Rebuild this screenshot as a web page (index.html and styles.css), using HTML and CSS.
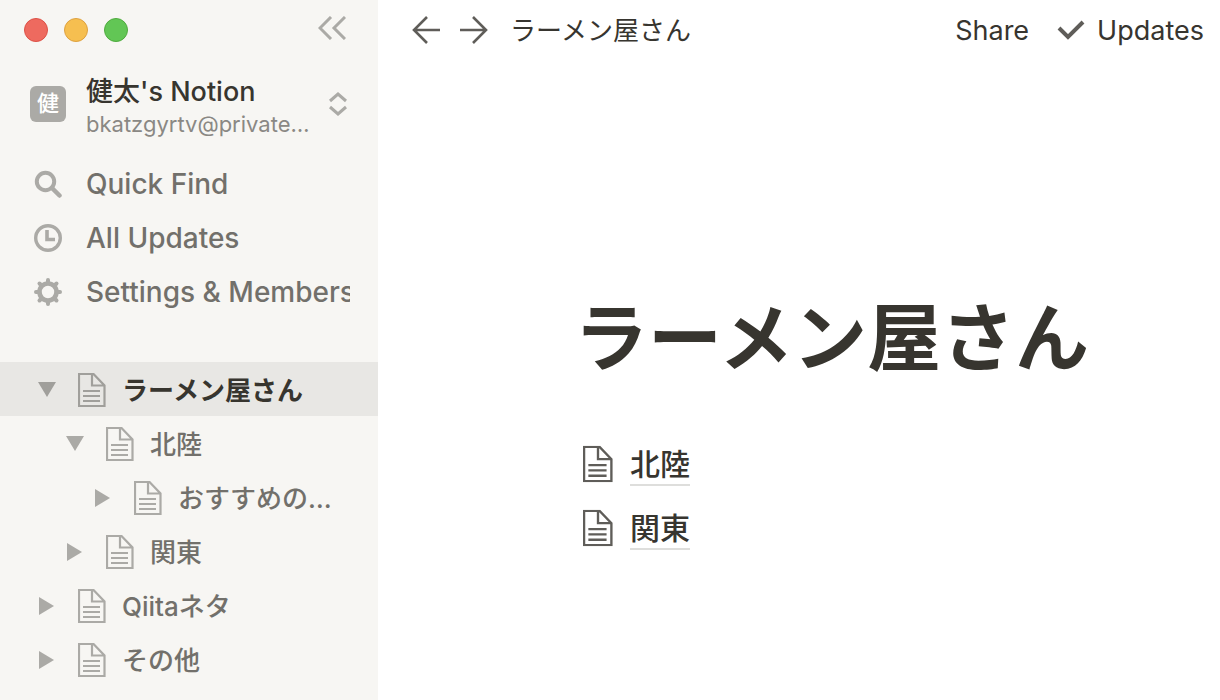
FILE: index.html
```
<!DOCTYPE html>
<html lang="ja">

<head>
    <meta charset="UTF-8">
    <meta name="viewport" content="width=device-width, initial-scale=1.0">
    <title>ラーメン屋さん</title>
    <link rel="stylesheet" href="styles.css">
</head>

<body>
    <!-- 共通アイコン -->
    <svg class="sprite" aria-hidden="true">
        <symbol id="icon-page" viewBox="0 0 28 34">
            <path fill="none" stroke="currentColor" stroke-width="2.200" d="M1 1H15.500L26.500 12.500V33H1ZM14 1V12.500H26.500M5 18H22M5 23H22M5 28H22" />
        </symbol>
        <symbol id="icon-open" viewBox="0 0 18 18">
            <path fill="currentColor" d="M0 1H18L9 16Z" />
        </symbol>
        <symbol id="icon-closed" viewBox="0 0 18 18">
            <path fill="currentColor" d="M1 0V18L16 9Z" />
        </symbol>
    </svg>

    <div class="app">
        <aside class="sidebar">
            <div class="window-bar">
                <button class="dot red" aria-label="閉じる"></button>
                <button class="dot yellow" aria-label="しまう"></button>
                <button class="dot green" aria-label="拡大"></button>
                <button class="collapse" aria-label="サイドバーを閉じる">
                    <svg width="28" height="24" viewBox="0 0 28 24">
                        <path fill="none" stroke="currentColor" stroke-width="3" d="M13 1L2 12L13 23M27 1L16 12L27 23" />
                    </svg>
                </button>
            </div>

            <button class="workspace">
                <span class="avatar">健</span>
                <span class="account">
                    <span class="account-name">健太's Notion</span>
                    <span class="account-mail">bkatzgyrtv@private…</span>
                </span>
                <svg width="18" height="24" viewBox="0 0 18 24">
                    <path fill="none" stroke="currentColor" stroke-width="3" d="M1 9L9 2L17 9M1 15L9 22L17 15" />
                </svg>
            </button>

            <nav class="menu">
                <a class="menu-item" href="#find">
                    <svg width="28" height="28" viewBox="0 0 28 28">
                        <circle cx="11.500" cy="11.500" r="8.700" fill="none" stroke="currentColor" stroke-width="4" />
                        <path stroke="currentColor" stroke-width="4.500" stroke-linecap="round" d="M18 18L25.500 25.500" />
                    </svg>
                    <span>Quick Find</span>
                </a>
                <a class="menu-item" href="#updates">
                    <svg width="28" height="28" viewBox="0 0 28 28">
                        <circle cx="14" cy="14" r="12.300" fill="none" stroke="currentColor" stroke-width="3.400" />
                        <path fill="none" stroke="currentColor" stroke-width="3.600" d="M13 6V15.500H21" />
                    </svg>
                    <span>All Updates</span>
                </a>
                <a class="menu-item" href="#settings">
                    <svg width="28" height="28" viewBox="0 0 28 28">
                        <circle cx="14" cy="14" r="8.500" fill="none" stroke="currentColor" stroke-width="4.600" />
                        <path stroke="currentColor" stroke-width="4" stroke-linecap="round" d="M14 2V5M14 23V26M2 14H5M23 14H26M5.500 5.500L7.500 7.500M20.500 20.500L22.500 22.500M5.500 22.500L7.500 20.500M20.500 7.500L22.500 5.500" />
                    </svg>
                    <span>Settings &amp; Members</span>
                </a>
            </nav>

            <ul class="tree">
                <li>
                    <div class="row current">
                        <button class="toggle" aria-label="ラーメン屋さんを閉じる"><svg width="18" height="18"><use href="#icon-open" /></svg></button>
                        <a class="page-link" href="#ramen"><svg width="28" height="34"><use href="#icon-page" /></svg><span>ラーメン屋さん</span></a>
                    </div>
                    <ul>
                        <li>
                            <div class="row">
                                <button class="toggle" aria-label="北陸を閉じる"><svg width="18" height="18"><use href="#icon-open" /></svg></button>
                                <a class="page-link" href="#hokuriku"><svg width="28" height="34"><use href="#icon-page" /></svg><span>北陸</span></a>
                            </div>
                            <ul>
                                <li>
                                    <div class="row">
                                        <button class="toggle" aria-label="おすすめを開く"><svg width="18" height="18"><use href="#icon-closed" /></svg></button>
                                        <a class="page-link" href="#osusume"><svg width="28" height="34"><use href="#icon-page" /></svg><span>おすすめの…</span></a>
                                    </div>
                                </li>
                            </ul>
                        </li>
                        <li>
                            <div class="row">
                                <button class="toggle" aria-label="関東を開く"><svg width="18" height="18"><use href="#icon-closed" /></svg></button>
                                <a class="page-link" href="#kanto"><svg width="28" height="34"><use href="#icon-page" /></svg><span>関東</span></a>
                            </div>
                        </li>
                    </ul>
                </li>
                <li>
                    <div class="row">
                        <button class="toggle" aria-label="Qiitaネタを開く"><svg width="18" height="18"><use href="#icon-closed" /></svg></button>
                        <a class="page-link" href="#qiita"><svg width="28" height="34"><use href="#icon-page" /></svg><span>Qiitaネタ</span></a>
                    </div>
                </li>
                <li>
                    <div class="row">
                        <button class="toggle" aria-label="その他を開く"><svg width="18" height="18"><use href="#icon-closed" /></svg></button>
                        <a class="page-link" href="#other"><svg width="28" height="34"><use href="#icon-page" /></svg><span>その他</span></a>
                    </div>
                </li>
            </ul>
        </aside>

        <main class="main">
            <header class="topbar">
                <button class="arrow" aria-label="戻る">
                    <svg width="28" height="28" viewBox="0 0 28 28">
                        <path fill="none" stroke="currentColor" stroke-width="2.600" d="M28 14H2M15 1L2 14L15 27" />
                    </svg>
                </button>
                <button class="arrow" aria-label="進む">
                    <svg width="28" height="28" viewBox="0 0 28 28">
                        <path fill="none" stroke="currentColor" stroke-width="2.600" d="M0 14H26M13 1L26 14L13 27" />
                    </svg>
                </button>
                <a class="crumb" href="#ramen"><span>ラーメン屋さん</span></a>
                <button class="action share"><span>Share</span></button>
                <button class="action">
                    <svg width="28" height="20" viewBox="0 0 28 20">
                        <path fill="none" stroke="currentColor" stroke-width="4" d="M2 8L11 17L26 2" />
                    </svg>
                    <span>Updates</span>
                </button>
            </header>

            <article class="page">
                <h1>ラーメン屋さん</h1>
                <a class="subpage" href="#hokuriku"><svg width="30" height="38" viewBox="0 0 28 34"><use href="#icon-page" /></svg><span>北陸</span></a>
                <a class="subpage" href="#kanto"><svg width="30" height="38" viewBox="0 0 28 34"><use href="#icon-page" /></svg><span>関東</span></a>
            </article>
        </main>
    </div>
</body>

</html>
```
FILE: styles.css
```
* {
    margin: 0;
    padding: 0;
    box-sizing: border-box;
}

body {
    font-family: Inter, "Noto Sans CJK JP", sans-serif;
    font-size: 26px;
    line-height: 32px;
    color: #37352f;
    background: #fff;
}

button {
    font: inherit;
    color: inherit;
    background: none;
    border: 0;
    cursor: pointer;
}

a {
    color: inherit;
    text-decoration: none;
}

ul {
    list-style: none;
}

svg {
    display: block;
    flex-shrink: 0;
}

.sprite {
    display: none;
}

.app {
    display: flex;
    min-height: 100vh;
}

/* サイドバー */
.sidebar {
    flex: 0 0 378px;
    min-width: 0;
    background: #f7f6f3;
    color: #72706b;
    font-weight: 500;
}

.window-bar {
    display: flex;
    align-items: center;
    gap: 16px;
    height: 60px;
    padding: 0 32px 0 24px;
}

.dot {
    width: 24px;
    height: 24px;
    border: 1px solid #dd5147;
    border-radius: 50%;
    background: #ee6a5f;
}

.yellow {
    background: #f6bf50;
    border-color: #dea140;
}

.green {
    background: #62c655;
    border-color: #4fab3e;
}

.collapse {
    margin-left: auto;
    padding-bottom: 4px;
    color: #abaaa6;
}

.workspace {
    display: flex;
    align-items: center;
    width: 100%;
    height: 88px;
    padding: 0 31px 0 30px;
    text-align: left;
    color: #abaaa6;
}

.avatar {
    flex: 0 0 36px;
    height: 36px;
    margin-right: 20px;
    border-radius: 6px;
    background: #abaaa6;
    color: #fff;
    font-size: 22px;
    line-height: 34px;
    text-align: center;
}

.account {
    flex: 0 1 230px;
    min-width: 0;
    margin-right: auto;
    padding-top: 8px;
}

.account-name,
.account-mail {
    display: block;
    overflow: hidden;
    white-space: nowrap;
    text-overflow: ellipsis;
}

.account-name {
    color: #37352f;
    font-size: 27px;
}

.account-mail {
    color: #8a8884;
    font-size: 22px;
    font-weight: 400;
}

.menu {
    padding: 9px 28px 0 34px;
}

.menu-item {
    display: flex;
    align-items: center;
    gap: 24px;
    height: 54px;
    font-size: 28px;
}

.menu-item svg,
.toggle,
.page-link svg {
    color: #abaaa6;
}

.menu-item span {
    overflow: hidden;
    white-space: nowrap;
}

.tree {
    padding-top: 43px;
}

.row {
    display: flex;
    align-items: center;
    height: 54px;
    padding: 2px 28px 0;
}

.tree ul .row {
    padding-left: 56px;
}

.tree ul ul .row {
    padding-left: 84px;
}

.toggle {
    display: flex;
    justify-content: center;
    width: 38px;
    margin-right: 12px;
}

.page-link {
    display: flex;
    align-items: center;
    gap: 16px;
    white-space: nowrap;
}

.page-link span,
.topbar span {
    display: block;
    padding-top: 2px;
}

.current {
    background: #e8e7e4;
    color: #37352f;
    font-weight: 700;
}

.current .toggle,
.current svg {
    color: #a09f9b;
}

/* 本文 */
.main {
    flex: 1;
    min-width: 0;
}

.topbar {
    display: flex;
    align-items: center;
    height: 60px;
    padding: 0 16px 0 34px;
}

.arrow {
    margin-right: 20px;
    color: #5f5d59;
}

.crumb {
    margin-left: 2px;
}

.action {
    display: flex;
    align-items: center;
    gap: 12px;
    font-size: 27px;
}

.action svg {
    color: #5f5d59;
}

.share {
    margin: 0 28px 0 auto;
}

.page {
    padding: 232px 60px 40px 196px;
}

h1 {
    margin-bottom: 48px;
    font-size: 74px;
    line-height: 92px;
    font-weight: 700;
}

.subpage {
    display: flex;
    align-items: center;
    gap: 17px;
    height: 64px;
    padding-left: 9px;
    font-size: 30px;
    font-weight: 500;
}

.subpage svg {
    color: #5f5d59;
}

.subpage span {
    padding-top: 2px;
    line-height: 40px;
    border-bottom: 2px solid #dededc;
}
```
